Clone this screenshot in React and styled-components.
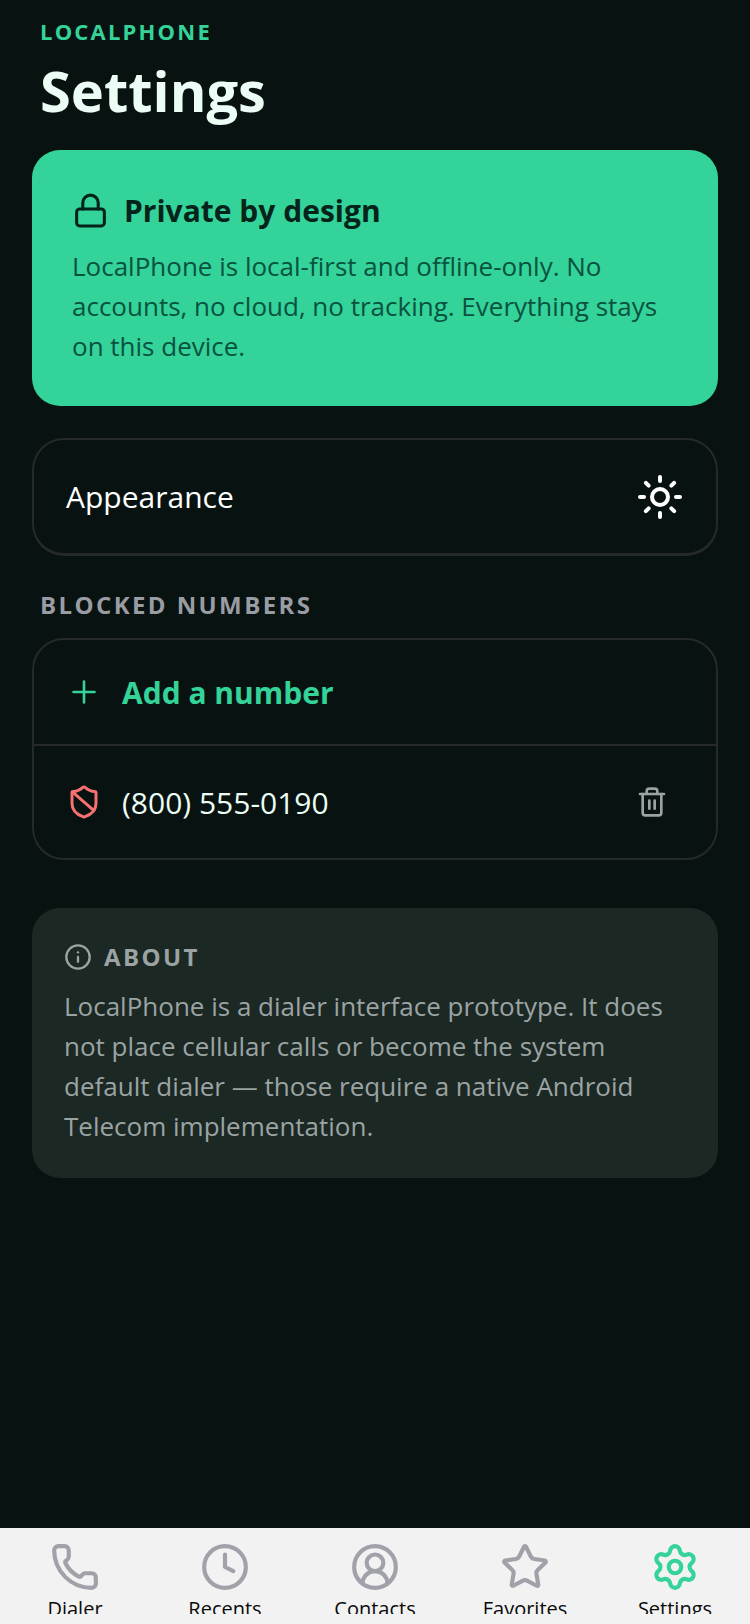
import React from 'react'
import styled, { createGlobalStyle } from 'styled-components'
import { Lock, Sun, Plus, ShieldBan, Trash2, Info, Phone, Clock, CircleUserRound, Star, Settings } from 'lucide-react'

const GlobalStyle = createGlobalStyle`
  html, body {
    margin: 0;
    padding: 0;
    background: #081311;
  }
  body {
    font-family: "Open Sans", sans-serif;
  }
  * {
    box-sizing: border-box;
  }
`

const Screen = styled.div`
  width: 750px;
  height: 1624px;
  display: flex;
  flex-direction: column;
  background: #081311;
  overflow: hidden;
`

const Content = styled.main`
  flex: 1;
  padding: 15px 32px 0;
`

const Eyebrow = styled.div`
  padding-left: 8px;
  font-size: 22px;
  line-height: 32px;
  font-weight: 700;
  letter-spacing: 2.2px;
  color: #34d399;
`

const Title = styled.h1`
  margin: 8px 0 25px;
  padding-left: 8px;
  font-size: 56px;
  line-height: 70px;
  font-weight: 700;
  color: #ecfdf5;
`

const HeroCard = styled.section`
  height: 256px;
  padding: 37px 40px;
  border-radius: 28px;
  background: #34d399;
`

const HeroHead = styled.div`
  display: flex;
  align-items: center;
  gap: 15px;
  height: 46px;
  margin-bottom: 13px;
  font-size: 30px;
  font-weight: 700;
  color: #04231a;
`

const Paragraph = styled.p`
  margin: 0;
  font-size: 26px;
  line-height: 40px;
  color: ${p => p.$color};
`

const Outlined = styled.section`
  border: 2px solid #25292a;
  border-radius: 32px;
  overflow: hidden;
`

const AppearanceCard = styled(Outlined)`
  height: 118px;
  margin-top: 32px;
  padding: 0 32px;
  border-bottom-width: 3px;
  display: flex;
  align-items: center;
  justify-content: space-between;
  font-size: 30px;
  color: #fff;
`

const SectionLabel = styled.h2`
  margin: 33px 0 17px;
  padding-left: 8px;
  font-size: 24px;
  line-height: 32px;
  font-weight: 700;
  letter-spacing: 2.4px;
  color: #9a9ca3;
`

const Row = styled.div`
  display: flex;
  align-items: center;
  gap: 20px;
  padding: 0 32px;
  height: ${p => p.$height}px;
  font-size: 30px;
  font-weight: ${p => p.$weight || 400};
  color: ${p => p.$color};
  & + & {
    border-top: 2px solid #25292a;
  }
`

const RowIcon = styled.span`
  display: flex;
  align-items: center;
  justify-content: center;
  width: 36px;
  height: 36px;
  flex: none;
`

const DeleteIcon = styled.span`
  display: flex;
  margin-left: auto;
  margin-right: 16px;
`

const AboutCard = styled.section`
  margin-top: 48px;
  height: 270px;
  padding: 33px 32px;
  border-radius: 28px;
  background: #1b2824;
`

const AboutHead = styled.div`
  display: flex;
  align-items: center;
  gap: 12px;
  margin-bottom: 13px;
  font-size: 24px;
  line-height: 32px;
  font-weight: 700;
  letter-spacing: 2.4px;
  color: #9ca3a3;
`

const TabBar = styled.nav`
  height: 96px;
  display: grid;
  grid-template-columns: repeat(5, 1fr);
  padding-top: 14px;
  background: #f2f2f2;
`

const Tab = styled.div`
  height: 72px;
  overflow: hidden;
  display: flex;
  flex-direction: column;
  align-items: center;
  font-size: 20px;
  line-height: 26px;
  color: #0a0a0a;
  svg {
    flex: none;
    margin-bottom: 4px;
  }
`

const tabs = [
  { label: 'Dialer', Icon: Phone },
  { label: 'Recents', Icon: Clock },
  { label: 'Contacts', Icon: CircleUserRound },
  { label: 'Favorites', Icon: Star },
  { label: 'Settings', Icon: Settings, active: true }
]

export default function App() {
  return (
    <>
      <GlobalStyle />
      <Screen>
        <Content>
          <Eyebrow>LOCALPHONE</Eyebrow>
          <Title>Settings</Title>

          <HeroCard>
            <HeroHead>
              <Lock size={37} strokeWidth={2} color="#04231a" />
              Private by design
            </HeroHead>
            <Paragraph $color="#08523f">
              LocalPhone is local-first and offline-only. No accounts, no cloud, no tracking. Everything stays on this device.
            </Paragraph>
          </HeroCard>

          <AppearanceCard>
            Appearance
            <Sun size={48} strokeWidth={2} color="#fff" />
          </AppearanceCard>

          <SectionLabel>BLOCKED NUMBERS</SectionLabel>
          <Outlined>
            <Row $height={104} $weight={700} $color="#34d399">
              <RowIcon><Plus size={36} strokeWidth={1.75} /></RowIcon>
              Add a number
            </Row>
            <Row $height={114} $color="#ecfdf5">
              <RowIcon><ShieldBan size={38} strokeWidth={2} color="#f87171" /></RowIcon>
              (800) 555-0190
              <DeleteIcon><Trash2 size={32} strokeWidth={2} color="#9ca3a3" /></DeleteIcon>
            </Row>
          </Outlined>

          <AboutCard>
            <AboutHead>
              <Info size={28} strokeWidth={2} />
              ABOUT
            </AboutHead>
            <Paragraph $color="#9ca3a3">
              LocalPhone is a dialer interface prototype. It does not place cellular calls or become the system default dialer — those require a native Android Telecom implementation.
            </Paragraph>
          </AboutCard>
        </Content>

        <TabBar>
          {tabs.map(({ label, Icon, active }) => (
            <Tab key={label}>
              <Icon size={50} strokeWidth={2} color={active ? '#34d399' : '#a1a1aa'} />
              {label}
            </Tab>
          ))}
        </TabBar>
      </Screen>
    </>
  )
}
